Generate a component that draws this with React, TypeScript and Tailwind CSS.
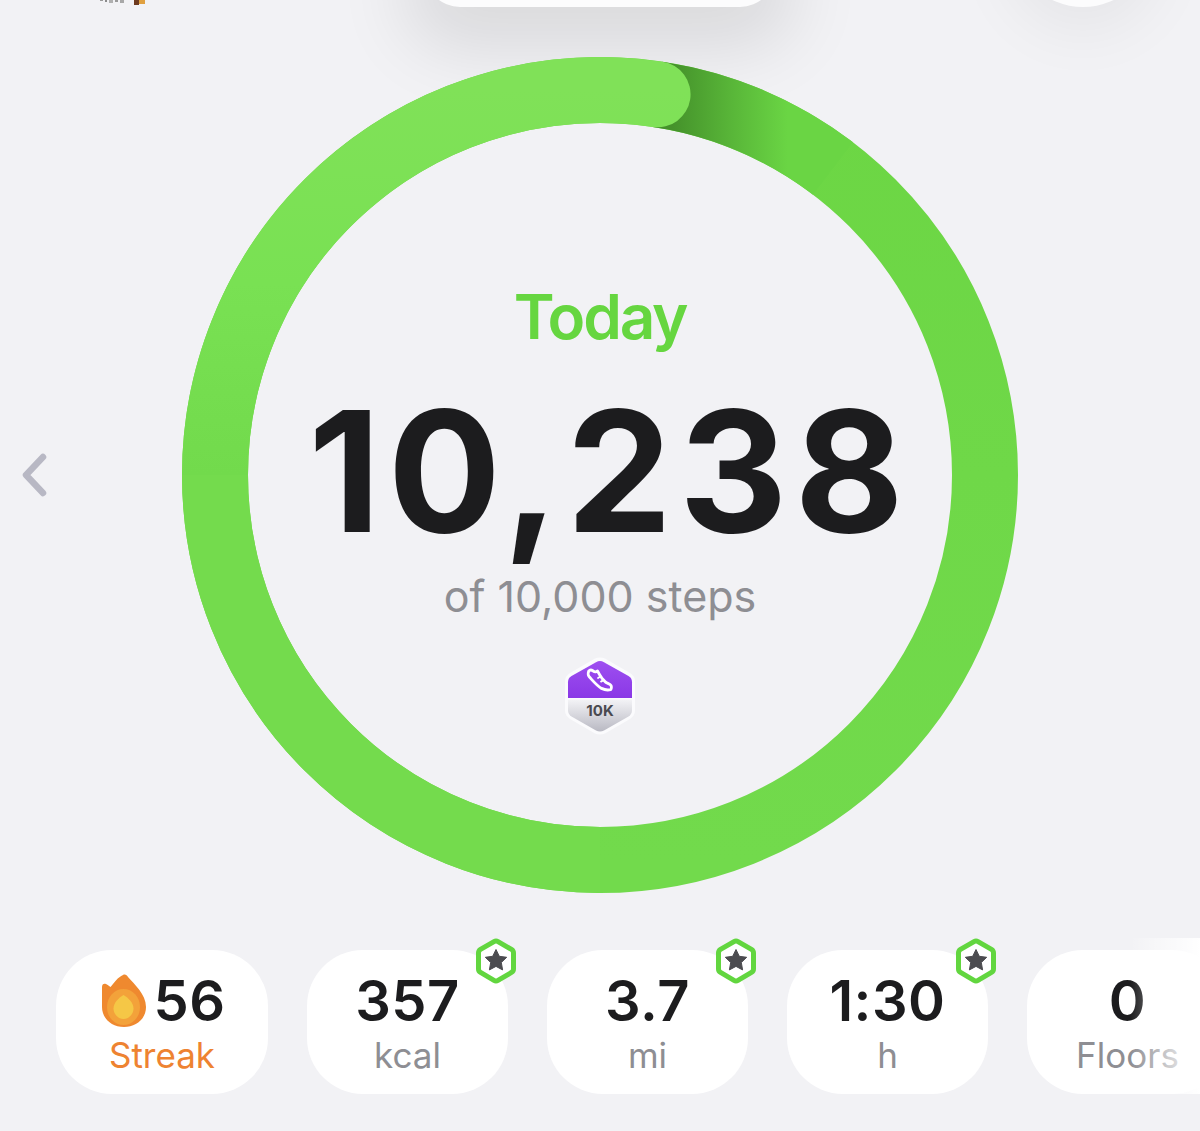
import React from "react"

const font = "font-['Inter','Liberation_Sans',sans-serif]"

const Flame = () => (
  <svg width="46" height="54" viewBox="0 0 46 54" className="ml-[3px] shrink-0">
    <path
      d="M22 1C24 0 26 1 27 3 33 10 45 20 45 33 45 45 35 53 23 53 10 53 1 44 1 33V13C1 10 3 9 5 10 7 11 8 12 9.500 13 13 9 17 3 22 1z"
      fill="#ef892f"
    />
    <ellipse cx="22.500" cy="33" rx="16.500" ry="18" fill="#f3a23a" />
    <path d="M22.500 21c5 3 10 8 10 13.500S28 45 22.500 45s-10-5-10-10.500S17.500 24 22.500 21z" fill="#f5c746" />
  </svg>
)

const GoalBadge = () => (
  <svg width="44" height="46" viewBox="0 0 44 46" className="absolute -right-[10px] -top-[12px]">
    <path
      d="M20 3.600q2-1.200 4 0L37.500 11.400q2 1.200 2 3.500v16q0 2.300-2 3.500L24 42.400q-2 1.200-4 0L6.500 34.400q-2-1.200-2-3.500v-16q0-2.300 2-3.500z"
      fill="#ffffff"
      stroke="#62d63f"
      strokeWidth="5"
    />
    <path
      d="m22 11.500 3.300 6.800 7.400 1-5.400 5.200 1.300 7.400-6.600-3.500-6.600 3.500 1.300-7.400-5.400-5.200 7.400-1z"
      fill="#4c4c50"
      stroke="#4c4c50"
      strokeWidth="1"
      strokeLinejoin="round"
    />
  </svg>
)

const Medal = () => (
  <div className="relative mt-[37px] h-[78px] w-[72px]">
    <svg
      width="72"
      height="78"
      viewBox="0 0 72 76"
      preserveAspectRatio="none"
      className="absolute left-0 top-0"
    >
      <defs>
        <linearGradient id="medalGrey" x1="0" y1="0" x2="0" y2="1">
          <stop offset="0" stopColor="#f3f3f6" />
          <stop offset="1" stopColor="#b9b9c3" />
        </linearGradient>
        <linearGradient id="medalPurple" x1="0" y1="0" x2="0" y2="1">
          <stop offset="0" stopColor="#9e4ff0" />
          <stop offset="1" stopColor="#8a38e6" />
        </linearGradient>
      </defs>
      <path
        d="M31 1.500q5-2 10 0l25 14q5 3 5 8.500v28q0 5.500-5 8.500l-25 14q-5 2-10 0l-25-14q-5-3-5-8.500V24q0-5.500 5-8.500z"
        fill="#fbfbfd"
      />
      <path d="M32 5q4-2 8 0l24.500 13.500q3.500 2 3.500 6V40H4V24.500q0-4 3.500-6z" fill="url(#medalPurple)" />
      <path d="M4 41.500h64V52q0 4-3.500 6L40 71.500q-4 2-8 0L7.500 58Q4 56 4 52z" fill="url(#medalGrey)" />
      <path
        d="M24.500 14c1.200-1.500 3-1.500 4.300-.6 1.100.8 2.200 1.400 3.200 1l1.500-.8c1.400 2.500 2.700 4.800 4.400 7l3.800 4c1.800 1.200 4.600 1.500 5.400 3.300.5 1.200.4 3.400-.5 3.900-2.800.8-6.500.1-9.100-1.200-4.600-2.600-8-6.800-12.300-11.300-1.300-1.300-1.200-4-.5-5.300z"
        fill="none"
        stroke="#ffffff"
        strokeWidth="2.800"
        strokeLinejoin="round"
      />
      <path d="m34 20.500 2.500-1.500M37 24l2.500-1.500" stroke="#ffffff" strokeWidth="1.800" strokeLinecap="round" />
    </svg>
    <span className="absolute left-0 right-0 top-[45px] text-center text-[15px] leading-[18px] font-bold text-[#4a4a50]">
      10K
    </span>
  </div>
)

const StatCard = ({
  value,
  label,
  star,
  wide,
  icon,
  labelColor,
}: {
  value: string
  label: string
  star?: boolean
  wide?: boolean
  icon?: React.ReactNode
  labelColor?: string
}) => (
  <div
    className={`relative flex h-[144px] shrink-0 flex-col items-center rounded-[56px] bg-white pt-[21px] ${
      wide ? "w-[212px]" : "w-[201px]"
    }`}
  >
    <div className="flex h-[60px] items-center gap-[6px]">
      {icon}
      <span className="text-[56px] leading-[60px] font-semibold tracking-[0.5px] text-[#1c1c1e]">{value}</span>
    </div>
    <span className={`mt-[2px] text-[35px] leading-[44px] ${labelColor ?? "text-[#8e8e93]"}`}>{label}</span>
    {star && <GoalBadge />}
  </div>
)

export default function App() {
  const r = 385
  const cx = 418
  const capAngle = (8.6 * Math.PI) / 180
  const capX = cx + r * Math.sin(capAngle)
  const capY = 418 - r * Math.cos(capAngle)

  return (
    <div className={`${font} relative h-[1131px] w-[1200px] overflow-hidden bg-[#f2f2f5]`}>
      {/* top nav, mostly cut off by the crop */}
      <div className="relative flex h-[7px] items-end">
        <div className="ml-[100px] flex h-[7px] w-[50px] items-start gap-[2px]">
          <div className="h-[1px] w-[3px] bg-[#9a9a9a]" />
          <div className="h-[2px] w-[2px] bg-[#8a8a8a]" />
          <div className="h-[3px] w-[4px] bg-[#b0b0b0]" />
          <div className="h-[2px] w-[3px] bg-[#9a9a9a]" />
          <div className="h-[3px] w-[4px] bg-[#a8a8a8]" />
          <div className="ml-[8px] h-[5px] w-[5px] bg-[#6e3b20]" />
          <div className="-ml-[2px] h-[4px] w-[6px] bg-[#e0a040]" />
        </div>
        <div className="ml-[275px] h-[70px] w-[350px] shrink-0 rounded-[38px] bg-[#fcfcfd] shadow-[0_20px_70px_22px_rgba(0,0,0,0.1)]" />
        <div className="ml-[237px] h-[142px] w-[142px] shrink-0 rounded-full bg-[#fcfcfd] shadow-[0_18px_60px_8px_rgba(0,0,0,0.05)]" />
      </div>

      <div className="mt-[50px] flex items-center pl-[21px]">
        <svg width="26" height="44" viewBox="0 0 26 44" className="shrink-0">
          <path
            d="M22 4 5 22l17 18"
            fill="none"
            stroke="#b8b8c4"
            strokeWidth="6.500"
            strokeLinecap="round"
            strokeLinejoin="round"
          />
        </svg>

        <div className="relative ml-[135px] flex h-[836px] w-[836px] flex-col items-center">
          <svg width="836" height="836" viewBox="0 0 836 836" className="absolute left-0 top-0">
            <defs>
              <linearGradient id="ringBase" x1="0" y1="0" x2="0" y2="1">
                <stop offset="0" stopColor="#6cd644" />
                <stop offset="1" stopColor="#72da4c" />
              </linearGradient>
              <linearGradient id="ringLap" x1="0" y1="0" x2="0" y2="1">
                <stop offset="0" stopColor="#80e158" />
                <stop offset="0.5" stopColor="#79e153" />
                <stop offset="1" stopColor="#72da4c" />
              </linearGradient>
              <linearGradient id="ringShadow" x1={capX + 15} y1="0" x2={capX + 130} y2="0" gradientUnits="userSpaceOnUse">
                <stop offset="0" stopColor="#45922b" />
                <stop offset="0.5" stopColor="#58b538" />
                <stop offset="1" stopColor="#6ad544" />
              </linearGradient>
            </defs>
            <circle cx={cx} cy="418" r={r} fill="none" stroke="url(#ringBase)" strokeWidth="66" />
            <path
              d={`M${capX} ${capY}A${r} ${r} 0 0 1 ${cx + r * Math.sin(0.65)} ${418 - r * Math.cos(0.65)}`}
              fill="none"
              stroke="url(#ringShadow)"
              strokeWidth="66"
            />
            <path
              d={`M${cx - r} 418A${r} ${r} 0 0 1 ${capX} ${capY}`}
              fill="none"
              stroke="url(#ringLap)"
              strokeWidth="66"
              strokeLinecap="round"
            />
            <path d={`M${cx - r} 418A${r} ${r} 0 0 0 ${cx} ${418 + r}`} fill="none" stroke="#74db4d" strokeWidth="66" />
          </svg>

          <div className="relative flex flex-col items-center">
            <span className="mt-[222px] text-[62px] leading-[76px] font-semibold tracking-[-2.2px] text-[#66d640]">
              Today
            </span>
            <span className="mt-[21px] pl-[19px] text-[168px] leading-[190px] font-bold tracking-[7px] text-[#1c1c1e]">
              10,238
            </span>
            <span className="mt-[6px] text-[43px] leading-[48px] tracking-[0px] text-[#8e8e93]">of 10,000 steps</span>
            <Medal />
          </div>
        </div>
      </div>

      <div className="relative mt-[57px] flex gap-[39px] pl-[56px]">
        <StatCard wide value="56" label="Streak" icon={<Flame />} labelColor="text-[#ee8331]" />
        <StatCard star value="357" label="kcal" />
        <StatCard star value="3.7" label="mi" />
        <StatCard star value="1:30" label="h" />
        <StatCard value="0" label="Floors" />
        {/* scroller fade on the right edge */}
        <div className="absolute -top-[12px] bottom-0 right-0 w-[70px] bg-gradient-to-r from-[#ffffff00] to-[#ffffff]" />
      </div>
    </div>
  )
}
